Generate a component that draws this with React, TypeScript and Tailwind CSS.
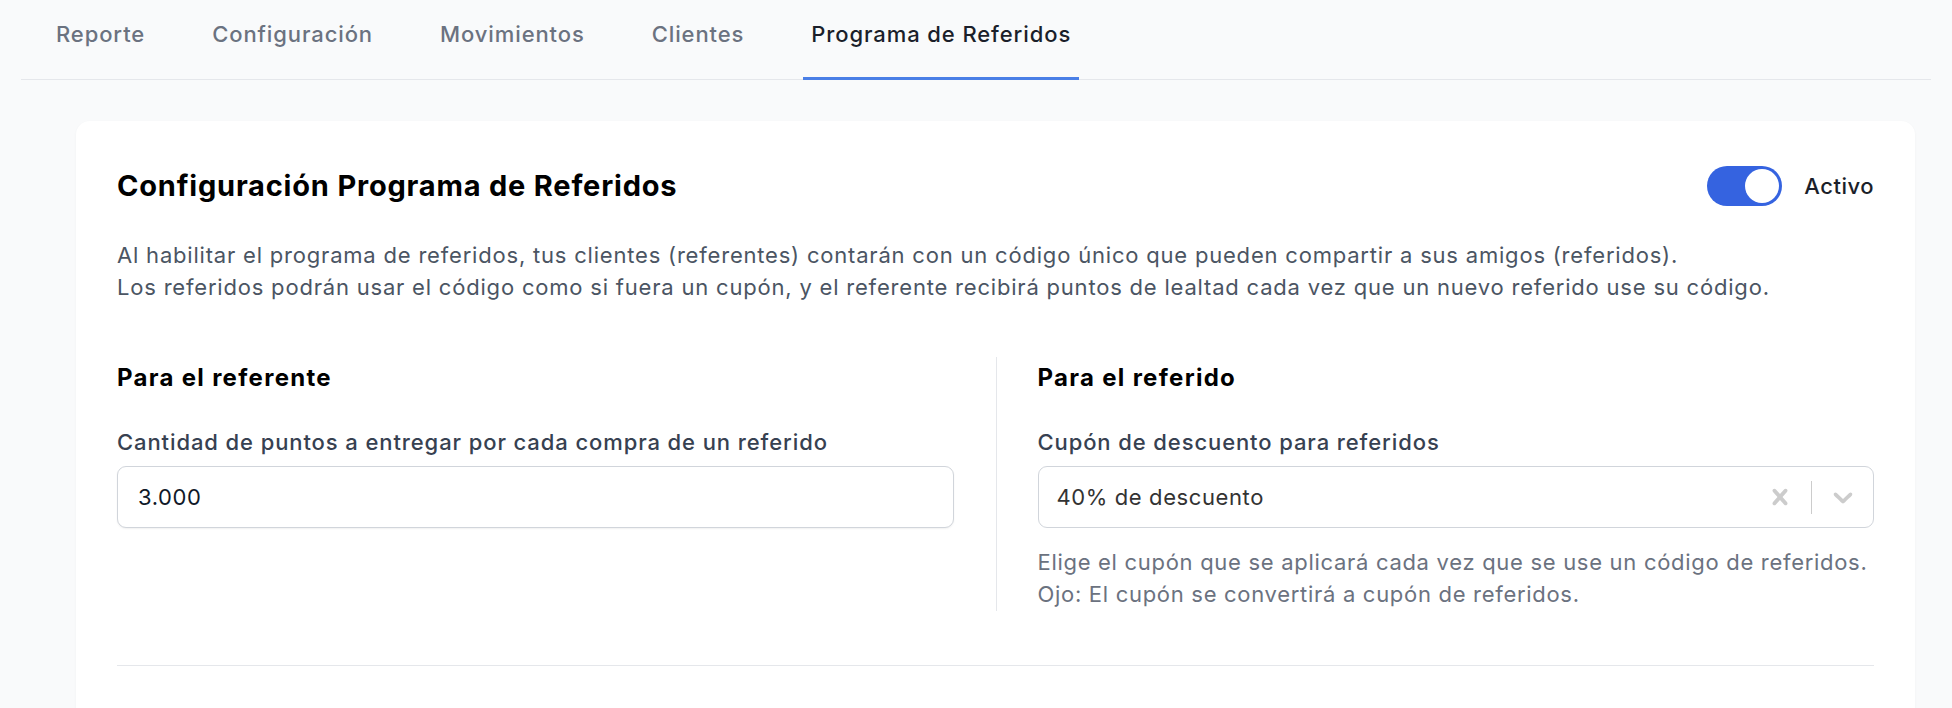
import React, { useState } from "react";

const tabs = ["Reporte", "Configuración", "Movimientos", "Clientes", "Programa de Referidos"];

function ClearIcon() {
  return (
    <svg viewBox="0 0 20 20" width="32" height="32" fill="#cccccc" aria-hidden="true">
      <path d="M14.348 14.849c-0.469 0.469-1.229 0.469-1.697 0l-2.651-3.030-2.651 3.029c-0.469 0.469-1.229 0.469-1.697 0-0.469-0.469-0.469-1.229 0-1.697l2.758-3.15-2.759-3.152c-0.469-0.469-0.469-1.228 0-1.697s1.228-0.469 1.697 0l2.652 3.031 2.651-3.031c0.469-0.469 1.228-0.469 1.697 0s0.469 1.229 0 1.697l-2.758 3.152 2.758 3.15c0.469 0.469 0.469 1.229 0 1.698z" />
    </svg>
  );
}

function ChevronIcon() {
  return (
    <svg viewBox="0 0 20 20" width="32" height="32" fill="#cccccc" aria-hidden="true">
      <path d="M4.516 7.548c0.436-0.446 1.043-0.481 1.576 0l3.908 3.747 3.908-3.747c0.533-0.481 1.141-0.446 1.574 0 0.436 0.445 0.408 1.197 0 1.615-0.406 0.418-4.695 4.502-4.695 4.502-0.217 0.223-0.502 0.335-0.787 0.335s-0.57-0.112-0.789-0.335c0 0-4.287-4.084-4.695-4.502s-0.436-1.17 0-1.615z" />
    </svg>
  );
}

export default function App() {
  const [active, setActive] = useState(true);
  const [points, setPoints] = useState("3.000");

  return (
    <div
      className="min-h-screen bg-[#f9fafb] px-[21px] text-gray-900"
      style={{ fontFamily: "Inter, 'Noto Sans', sans-serif" }}
    >
      {/* Tab bar */}
      <nav className="flex gap-[51px] border-b border-[#e5e7eb] pl-[27px]">
        {tabs.map((t, i) => {
          const selected = i === tabs.length - 1;
          return (
            <button
              key={t}
              className={
                selected
                  ? "-mb-px border-b-[3px] border-[#4a7fe6] px-2 pt-[20px] pb-[29px] text-[22px] leading-[28px] font-medium tracking-[0.9px] text-[#1b1f2a]"
                  : "-mb-px border-b-[3px] border-transparent px-2 pt-[20px] pb-[29px] text-[22px] leading-[28px] font-medium tracking-[0.9px] text-[#6b7280]"
              }
            >
              {t}
            </button>
          );
        })}
      </nav>

      <div className="pt-[41px] pl-[55px] pr-[16px]">
        <section className="rounded-[14px] bg-white px-[41px] pt-[45px] pb-[40px] shadow-[0_1px_3px_rgba(0,0,0,0.04)]">
          {/* Header */}
          <div className="flex h-[40px] items-center justify-between">
            <h2 className="text-[29px] leading-[36px] font-bold tracking-[0.8px] text-black">
              Configuración Programa de Referidos
            </h2>
            <div className="flex items-center gap-[22px]">
              <button
                onClick={() => setActive(!active)}
                className={
                  active
                    ? "flex h-[40px] w-[75px] items-center justify-end rounded-full bg-[#3563e0] p-[3px]"
                    : "flex h-[40px] w-[75px] items-center justify-start rounded-full bg-gray-300 p-[3px]"
                }
              >
                <span className="h-[34px] w-[34px] rounded-full bg-white" />
              </button>
              <span className="text-[22px] leading-[28px] font-medium tracking-[0.5px] text-[#1b1f2a]">Activo</span>
            </div>
          </div>

          <p className="mt-[33px] text-[22px] leading-[32px] tracking-[0.8px] text-[#4b5563]">
            Al habilitar el programa de referidos, tus clientes (referentes) contarán con un código único que pueden
            compartir a sus amigos (referidos).
            <br />
            Los referidos podrán usar el código como si fuera un cupón, y el referente recibirá puntos de lealtad cada
            vez que un nuevo referido use su código.
          </p>

          {/* Two columns */}
          <div className="mt-[54px] grid grid-cols-2">
            <div className="pt-[7px] pr-[42px]">
              <h3 className="text-[24px] leading-[28px] font-bold tracking-[1.3px] text-black">Para el referente</h3>
              <label className="mt-[36px] block text-[22px] leading-[28px] font-medium tracking-[0.9px] text-[#374151]">
                Cantidad de puntos a entregar por cada compra de un referido
              </label>
              <input
                value={points}
                onChange={(e) => setPoints(e.target.value)}
                className="mt-[10px] block h-[62px] w-full rounded-[9px] border border-[#d1d5db] bg-white px-[20px] text-[22px] tracking-[0.6px] text-gray-900 shadow-[0_1px_2px_rgba(0,0,0,0.06)] outline-none"
              />
            </div>

            <div className="border-l border-[#e5e7eb] pt-[7px] pb-[1px] pl-[41px]">
              <h3 className="text-[24px] leading-[28px] font-bold tracking-[1.3px] text-black">Para el referido</h3>
              <label className="mt-[36px] block text-[22px] leading-[28px] font-medium tracking-[0.9px] text-[#374151]">
                Cupón de descuento para referidos
              </label>
              <div className="mt-[10px] flex h-[62px] items-center rounded-[9px] border border-[#d1d5db] bg-white pr-[14px] pl-[18px]">
                <span className="flex-1 text-[22px] tracking-[0.6px] text-[#333333]">40% de descuento</span>
                <ClearIcon />
                <span className="mx-[15px] h-[33px] w-px bg-[#cccccc]" />
                <ChevronIcon />
              </div>
              <p className="mt-[18px] whitespace-nowrap text-[22px] leading-[32px] tracking-[0.7px] text-[#6b7280]">
                Elige el cupón que se aplicará cada vez que se use un código de referidos.
                <br />
                Ojo: El cupón se convertirá a cupón de referidos.
              </p>
            </div>
          </div>

          <div className="mt-[54px] h-px bg-[#e5e7eb]" />
          <div className="h-[120px]" />
        </section>
      </div>
    </div>
  );
}
